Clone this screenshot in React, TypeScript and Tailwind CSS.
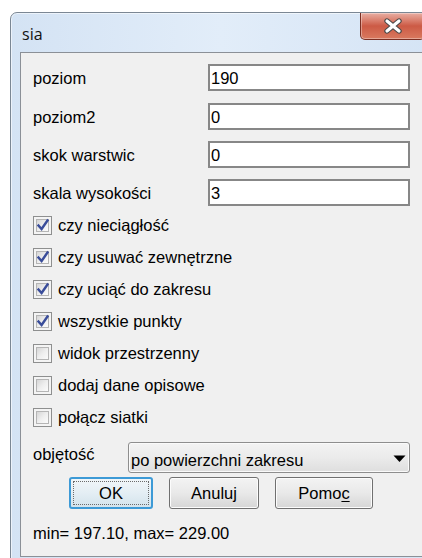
import React from "react";

type FieldRow = { label: string; value: string; mt: string };

const fields: FieldRow[] = [
  { label: "poziom", value: "190", mt: "mt-0" },
  { label: "poziom2", value: "0", mt: "mt-[12px]" },
  { label: "skok warstwic", value: "0", mt: "mt-[11px]" },
  { label: "skala wysokości", value: "3", mt: "mt-[11px]" },
];

const checks: { label: string; checked: boolean }[] = [
  { label: "czy nieciągłość", checked: true },
  { label: "czy usuwać zewnętrzne", checked: true },
  { label: "czy uciąć do zakresu", checked: true },
  { label: "wszystkie punkty", checked: true },
  { label: "widok przestrzenny", checked: false },
  { label: "dodaj dane opisowe", checked: false },
  { label: "połącz siatki", checked: false },
];

function CheckBox({ checked }: { checked: boolean }) {
  return (
    <div className="w-[19px] h-[19px] border border-[#8e8f8f] bg-[#f4f4f4] p-[2px] shrink-0">
      <div className="relative w-full h-full border border-[#b5b5b5] bg-gradient-to-br from-[#d6d6d6] via-[#eeeeee] to-[#fbfbfb]">
        {checked && (
          <svg
            className="absolute left-[-1px] top-[-2px]"
            width="14"
            height="14"
            viewBox="0 0 14 14"
          >
            <path
              d="M2.5 7.5 L5.6 11 L11.5 2.5"
              fill="none"
              stroke="#3a4d9a"
              strokeWidth="2.4"
              strokeLinecap="square"
              strokeLinejoin="miter"
            />
          </svg>
        )}
      </div>
    </div>
  );
}

function Button({
  children,
  width,
  primary,
}: {
  children: React.ReactNode;
  width: string;
  primary?: boolean;
}) {
  if (primary) {
    return (
      <div
        className={`${width} h-[32px] rounded-[3px] border-2 border-[#3d9ad6] bg-gradient-to-b from-[#f1f6f9] via-[#e4eef4] to-[#d3e3ec] p-[2px]`}
      >
        <div className="w-full h-full border border-dotted border-[#6b6b6b] flex items-center justify-center text-[16.5px] leading-[20px] text-black">
          {children}
        </div>
      </div>
    );
  }
  return (
    <div
      className={`${width} h-[32px] rounded-[3px] border border-[#707070] bg-gradient-to-b from-[#f3f3f3] via-[#e9e9e9] to-[#d6d6d6] shadow-[inset_0_0_0_1px_#fcfcfc] flex items-center justify-center text-[16.5px] leading-[20px] text-black`}
    >
      {children}
    </div>
  );
}

export default function App() {
  return (
    <div className="w-[422px] h-[558px] bg-white overflow-hidden pl-[10px] pt-[12px] font-['Liberation_Sans',Arial,sans-serif]">
      {/* window frame */}
      <div className="w-[422px] h-[560px] rounded-t-[7px] border border-[#7b8794] bg-gradient-to-r from-[#d4e3f4] via-[#e2edf9] to-[#d5e4f5] shadow-[inset_0_0_0_1px_rgba(255,255,255,0.55)] flex flex-col">
        {/* title bar */}
        <div className="h-[39px] flex items-start shrink-0">
          <span className="ml-[11px] mt-[11px] text-[16px] leading-[20px] text-[#111] font-['Open_Sans',sans-serif]">
            sia
          </span>
          <div className="ml-auto mr-[6px] w-[65px] h-[27px] rounded-b-[5px] border border-t-0 border-[#7a2f23] bg-gradient-to-b from-[#e8aea3] via-[#cc5a45] to-[#d9795f] shadow-[inset_0_0_0_1px_rgba(255,255,255,0.35)] flex items-center justify-center">
            <svg width="22" height="16" viewBox="0 0 22 16">
              <path
                d="M5 3 L17 13 M17 3 L5 13"
                stroke="#4a4a4a"
                strokeWidth="5.4"
                strokeLinecap="round"
              />
              <path
                d="M5 3 L17 13 M17 3 L5 13"
                stroke="#ffffff"
                strokeWidth="3.2"
                strokeLinecap="round"
              />
            </svg>
          </div>
        </div>

        {/* client area */}
        <div className="ml-[9px] w-[403px] h-[505px] shrink-0 border border-[#8b9097] bg-[#f0f0f0] flex flex-col text-black">
          {/* numeric fields */}
          <div className="pt-[11px] flex flex-col">
            {fields.map((f) => (
              <div key={f.label} className={`${f.mt} flex items-center h-[27px]`}>
                <span className="pl-[12px] w-[187px] text-[16.5px] leading-[20px]">
                  {f.label}
                </span>
                <div className="w-[202px] h-[27px] border-2 border-[#878787] bg-white flex items-center pl-[1px] text-[16.5px] leading-[20px]">
                  {f.value}
                </div>
              </div>
            ))}
          </div>

          {/* options */}
          <div className="mt-[3px] flex flex-col">
            {checks.map((c) => (
              <div key={c.label} className="h-[32px] flex items-center pl-[12px]">
                <CheckBox checked={c.checked} />
                <span className="ml-[6px] text-[16.5px] leading-[20px]">{c.label}</span>
              </div>
            ))}
          </div>

          {/* volume mode */}
          <div className="mt-[9px] flex items-start">
            <span className="pl-[12px] w-[107px] mt-[2px] text-[16.5px] leading-[20px]">
              objętość
            </span>
            <div className="w-[282px] h-[31px] rounded-[3px] border border-[#8e8e8e] bg-gradient-to-b from-[#f3f3f3] via-[#ebebeb] to-[#dedede] shadow-[inset_0_0_0_1px_#fafafa] flex items-center pl-[2px] pr-[3px]">
              <span className="mt-[4px] text-[16.5px] leading-[20px]">po powierzchni zakresu</span>
              <svg className="ml-auto mt-[2px]" width="13" height="8" viewBox="0 0 13 8">
                <path d="M0.5 0.5 H12.5 L6.5 7 Z" fill="#000" />
              </svg>
            </div>
          </div>

          {/* buttons */}
          <div className="mt-[4px] pl-[48px] flex gap-[16px]">
            <Button width="w-[84px]" primary>
              OK
            </Button>
            <Button width="w-[90px]">Anuluj</Button>
            <Button width="w-[98px]">
              <span>
                Pomo<span className="underline underline-offset-2">c</span>
              </span>
            </Button>
          </div>

          {/* range summary */}
          <div className="mt-[14px] pl-[12px] text-[16.5px] leading-[20px]">
            min= 197.10, max= 229.00
          </div>
        </div>
      </div>
    </div>
  );
}
